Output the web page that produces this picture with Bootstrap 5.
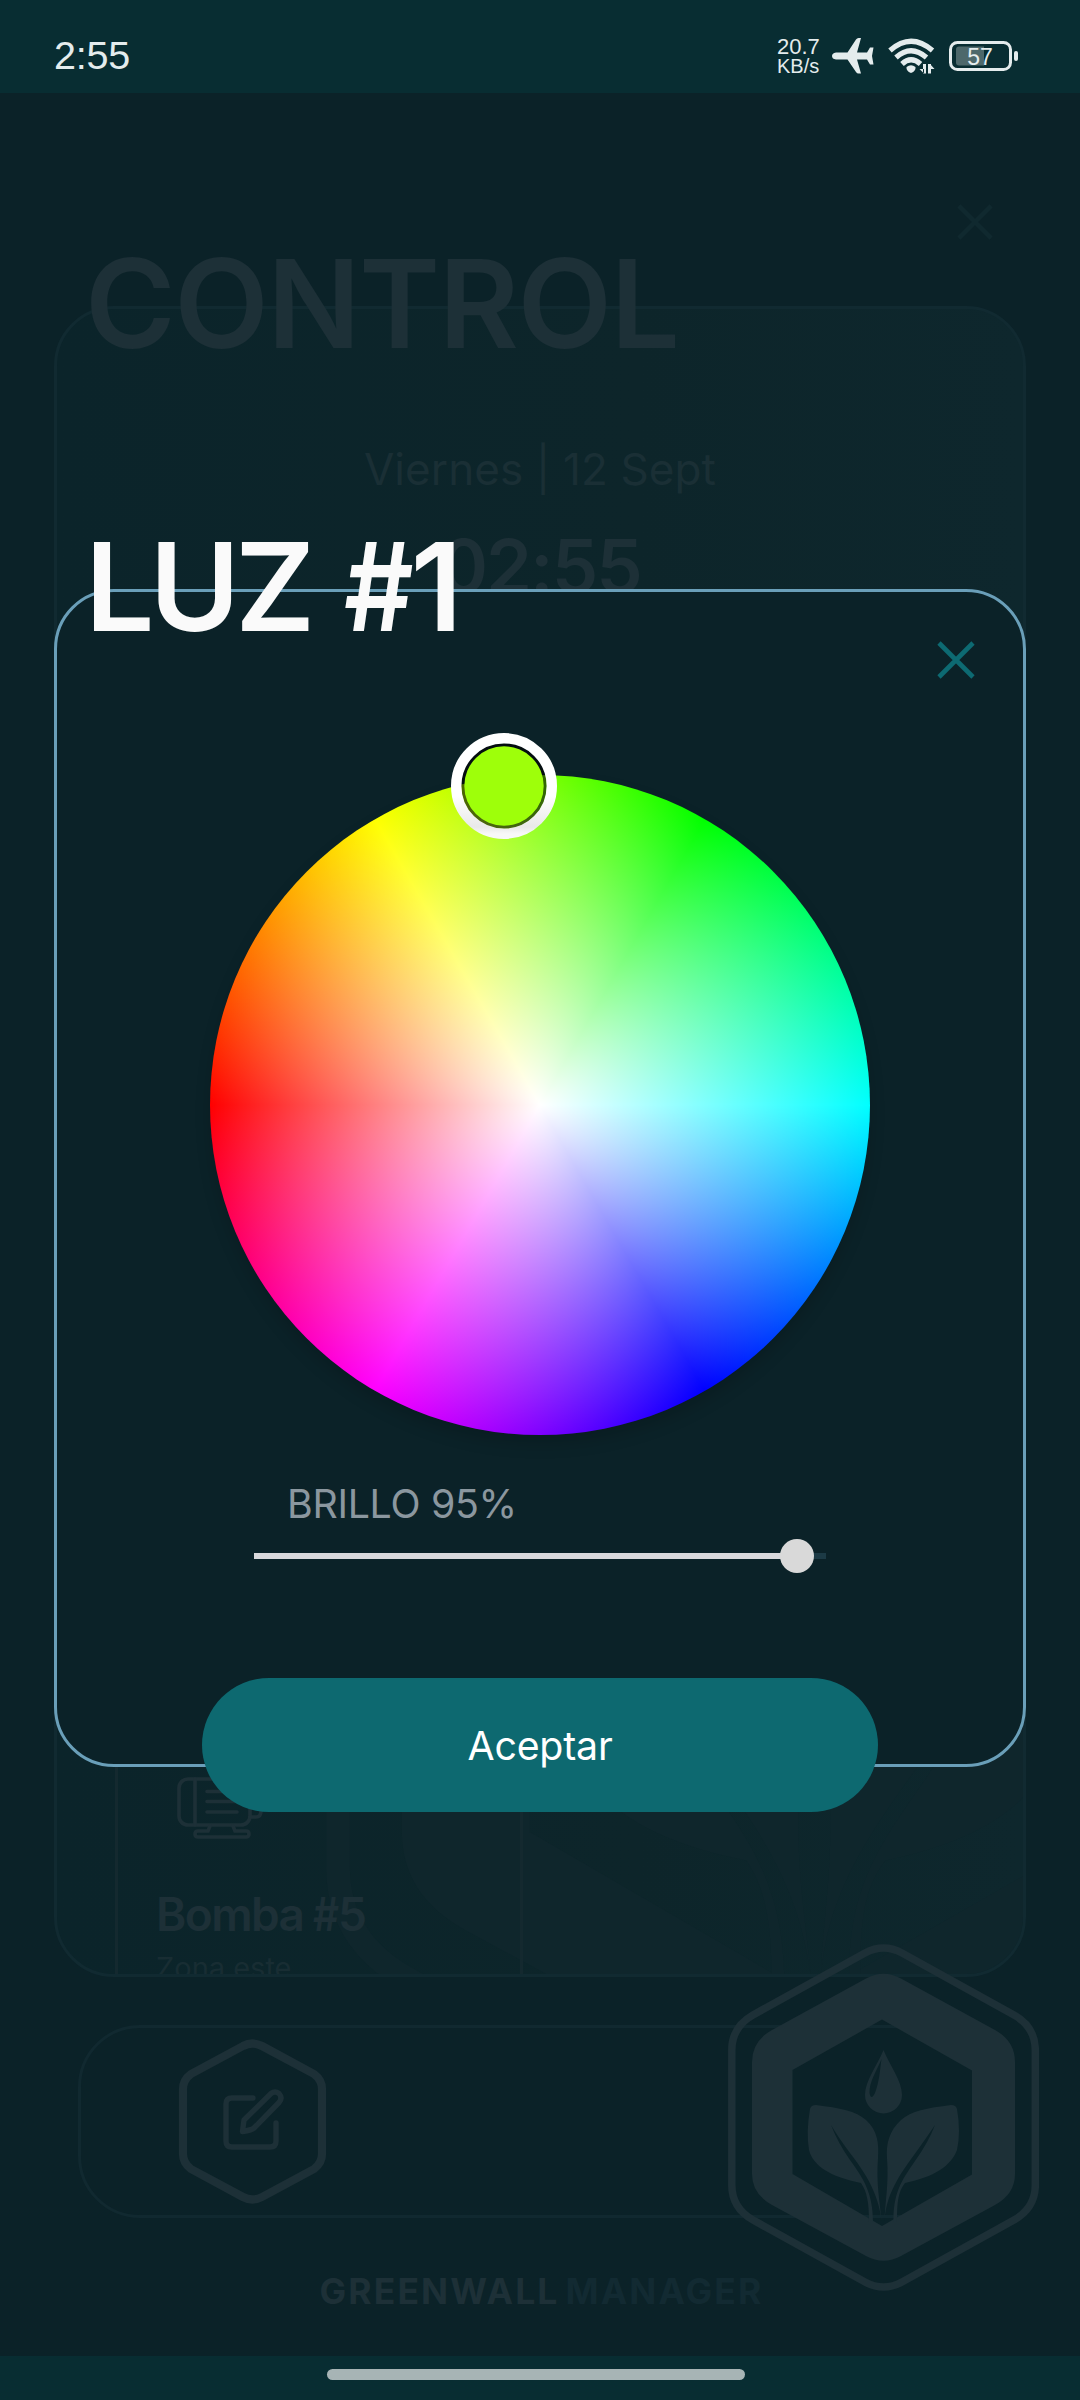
<!DOCTYPE html>
<html lang="es">
<head>
<meta charset="utf-8">
<meta name="viewport" content="width=device-width, initial-scale=1">
<title>Greenwall Manager</title>
<link href="https://cdn.jsdelivr.net/npm/bootstrap@5.3.0/dist/css/bootstrap.min.css" rel="stylesheet">
<style>
  body { background: #0b2228; font-family: Inter, sans-serif; }
  .phone { width: 1080px; height: 2400px; background: #0b2228; color: #1d3037; }
  .statusbar { height: 93px; background: #082d32; color: #e4eced; font-family: "Liberation Sans", sans-serif; padding: 17px 61px 0 54px; }
  .status-icons { height: 78px; }
  .clock { font-size: 39.5px; line-height: 76px; letter-spacing: -.2px; }
  .speed { font-size: 22px; line-height: 19px; width: 46px; margin-right: 9px; }
  .speed small { font-size: 20px; }
  .closerow { height: 151px; padding: 0 87px 4px 0; color: #10292f; }
  .bigtitle { font-size: 123px; line-height: 120px; font-weight: 600; letter-spacing: -5px; z-index: 1; }
  .page-title { margin-left: 85px; letter-spacing: -1.5px; }
  .panel { margin: -58px 54px 0 54px; height: 1671px; border: 3px solid #112a31; border-radius: 60px; background: linear-gradient(90deg, #0b242a, #0d252a 60%, #0e272d); }
  .datetxt { font-size: 44px; line-height: 60px; margin-top: 130px; letter-spacing: .1px; color: #1a2f35; }
  .timetxt { font-size: 74px; line-height: 80px; margin-top: 27px; font-weight: 600; letter-spacing: -2px; }
  .tile { margin: 1044px 0 0 58px; width: 408px; height: 400px; border: solid #14292f; border-width: 3px; padding: 124px 0 0 38px; }
  .tile-name { font-size: 46px; line-height: 60px; font-weight: 600; letter-spacing: -1.6px; margin-top: 45px; }
  .tile-zone { font-size: 29px; line-height: 40px; margin-top: 4px; letter-spacing: 0; color: #182d33; }
  .watermark { left: 269px; top: 796px; width: 983px; height: 1097px; color: #0f262c; }
  .toolbar { margin: 48px 78px 0; height: 193px; border: 3px solid #112930; border-radius: 62px; padding-left: 97px; }
  .brandline { font-size: 35.5px; line-height: 40px; font-weight: 650; margin-top: 54px; padding-left: 3px; gap: 6px; letter-spacing: 2.1px; }
  .brandline .second { color: #122a32; }
  .badge-logo { left: 728px; top: 1944px; width: 311px; height: 347px; color: #1d3037; }
  .navstrip { height: 44px; background: #082d32; padding: 13px 8px 0 0; }
  .navpill { width: 418px; height: 11px; background: #a7b4b5; border-radius: 6px; }

  .dialog { left: 54px; top: 589px; width: 972px; height: 1178px; border: 3px solid #6a9fb9; border-radius: 60px; background: #0b2228; }
  .dialog .bigtitle { color: #fafafa; margin: -65px 0 0 28px; word-spacing: 8px; }
  .hash { display: inline-block; letter-spacing: 0; transform: scaleX(.88); transform-origin: left; margin-right: -.105em; }
  .dialog-close { color: #0d6a72; margin-top: -6px; height: 38px; }
  .wheel { width: 660px; height: 660px; margin-top: 96px; background: radial-gradient(closest-side, #fff, rgba(255,255,255,0)), conic-gradient(from 270deg, #f00, #ff0, #0f0, #0ff, #00f, #f0f, #f00); box-shadow: 0 9px 16px rgba(0,0,0,.16); }
  .handle { left: 241px; top: -42px; width: 106px; height: 106px; }
  .bright { width: 572px; margin-top: 39px; }
  .bright-label { font-size: 39.3px; line-height: 60px; color: #8b979f; padding-left: 33px; letter-spacing: -.3px; }
  .track { height: 6px; margin-top: 19px; background: #1c3a45; }
  .track-fill { height: 6px; background: #d9d9dc; }
  .thumb { width: 34px; height: 34px; right: -17px; top: -14px; background: #d9d9d9; }
  .accept { width: 676px; height: 134px; margin-bottom: -48px; padding: 8px 0 6px; border-radius: 67px; background: #0d6970; color: #fff; font-size: 39.3px; letter-spacing: -.2px; }
  .accept:hover { background: #0d6970; color: #fff; }
</style>
</head>
<body>
<svg class="d-none">
  <symbol id="logo" viewBox="0 0 311 347">
    <path fill="none" stroke="currentColor" stroke-width="7.5" d="M137 9 Q155.5 -1 174 9 L286 71 Q307.3 83 307.3 106 V241 Q307.3 264 286 276 L174 338 Q155.5 348 137 338 L25 276 Q3.8 264 3.8 241 V106 Q3.8 83 25 71 Z"/>
    <path fill="currentColor" fill-rule="evenodd" d="M138 34.5 Q155.5 25 173 34.5 L267 86 Q287 97 287 118 V230 Q287 250 267 261 L173 312 Q155.5 321.5 138 312 L44 261 Q24 250 24 230 V118 Q24 97 44 86 Z M154 75.6 L64.5 126 V230 L154 282 L244 230.5 V126.5 Z"/>
    <path fill="currentColor" fill-rule="evenodd" d="M155.5 106 C162 122 174 137 174 151 A18.5 18.5 0 0 1 137 151 C137 137 149 122 155.5 106 Z M153.5 115 C149 126 141 138 141.5 149 Q143 157 147 149 C151 139 152 126 153.5 115 Z"/>
    <path fill="currentColor" d="M82 165 Q83 161 88 161 C112 164 128 167 138 176 C150 187 151 200 150 214 C148 240 152 258 153.5 277 C151 255 143 236 122 209 Q110 193 103 181 Q110 199 122 216 C136 235 145 250 145 278 H141 C141 258 139 248 133 239 C103 233 85 222 81 206 Q78 188 82 165 Z"/>
    <path fill="currentColor" d="M229 165 Q228 161 223 161 C199 164 183 167 173 176 C161 187 158 200 159 214 C161 240 157 258 156.5 277 C158 255 166 238 186 211 Q199 193 207 181 Q200 199 187 217 C173 237 165 250 165.5 278 H169 C169 258 170 248 177 239 C206 233 223 222 229 206 Q233 188 229 165 Z"/>
  </symbol>
  <symbol id="cross" viewBox="0 0 38 38">
    <path d="M2 2 L36 36 M36 2 L2 36" fill="none" stroke="currentColor" stroke-width="4.6"/>
  </symbol>
</svg>

<div class="phone position-relative overflow-hidden d-flex flex-column">
  <header class="statusbar d-flex justify-content-between align-items-start">
    <div class="clock">2:55</div>
    <div class="status-icons d-flex align-items-center">
      <div class="speed">20.7<br><small>KB/s</small></div>
      <svg width="42" height="36" viewBox="0 0 42 36"><path fill="currentColor" d="M4 14.5 H15.5 L24 1.5 Q25 0 26.5 0 H29 L25 14.5 H35 L38 9.5 H41.5 L40 18 L41.5 26.5 H38 L35 21.5 H25 L29 35.5 H26.5 Q25 35.5 24 34 L15.5 21.5 H4 Q0 21 0 18 Q0 15 4 14.5 Z"/></svg>
      <svg style="margin-left:14px" width="47" height="36" viewBox="0 0 47 36"><g fill="none" stroke="currentColor" stroke-width="5.2"><path d="M2 12.5 Q23 -6 44.5 12.5"/><path d="M8 19.5 Q23 6 38.5 19.5"/><path d="M14 26 Q23 17.5 32.5 26"/></g><path fill="currentColor" d="M18.5 29 Q23 25.5 27.5 29 Q28 33 23 35 Q18 33 18.5 29 Z M35 26 V35.5 H38 V26 Z M31.5 31 H36 V35.5 Z M40 26 V35.5 H43 V26 Z M42 31 H46.5 L42 26 Z"/></svg>
      <svg style="margin-left:14px" width="70" height="32" viewBox="0 0 70 32"><rect x="1.5" y="2.5" width="60" height="27" rx="7" fill="none" stroke="currentColor" stroke-width="3"/><path d="M10 6.5 H35 V25.5 H10 Q7 25.5 7 22.5 V9.5 Q7 6.5 10 6.5 Z" fill="#4d686b"/><rect x="65" y="11" width="4" height="10" rx="2" fill="currentColor"/><text x="31" y="24.5" text-anchor="middle" font-size="23" fill="currentColor">57</text></svg>
    </div>
  </header>

  <div class="closerow d-flex justify-content-end align-items-end"><svg width="36" height="36"><use href="#cross"/></svg></div>
  <div class="bigtitle page-title position-relative">CONTROL</div>
  <main class="panel position-relative overflow-hidden flex-shrink-0">
    <svg class="watermark position-absolute"><use href="#logo"/></svg>
    <div class="datetxt text-center position-relative">Viernes | 12 Sept</div>
    <div class="timetxt text-center position-relative">02:55</div>
    <section class="tile position-relative">
      <svg class="d-block" style="margin-left:21px" width="86" height="62" viewBox="0 0 86 62" fill="none" stroke="currentColor" stroke-width="3.6" stroke-linecap="round"><rect x="2" y="2" width="71" height="46" rx="9"/><path d="M18 2 V48 M30 14.5 H60 M30 24.5 H60 M30 35 H60 M73 11 H79 Q84 11 84 16 V34 Q84 40 79 40 H73 M33 49 L31 54 H21 Q18 54 18 57 Q18 60 21 60 H69 Q72 60 72 57 Q72 54 69 54 H58 L56 49"/></svg>
      <div class="tile-name">Bomba <span class="hash">#</span>5</div>
      <div class="tile-zone">Zona este</div>
    </section>
  </main>
  <div class="toolbar d-flex align-items-center flex-shrink-0">
    <svg width="149" height="165" viewBox="0 0 149 165" fill="none" stroke="currentColor" stroke-linecap="round" stroke-linejoin="round">
      <path stroke-width="8.2" d="M65 7 Q74.5 2 84 7 L136 35 Q144 41 144 50 V115 Q144 124 136 130 L84 158 Q74.5 163 65 158 L13 130 Q5 124 5 115 V50 Q5 41 13 35 Z"/>
      <path stroke-width="5.4" d="M75 59 H54 Q48 59 48 65 V102 Q48 108 54 108 H92 Q98 108 98 102 V84 M66 81 L93 54.5 Q97 51.5 101 54.5 Q105 59 101 63.5 L76 89 Q74 91 64.5 92.5 Z"/>
    </svg>
  </div>
  <footer class="brandline d-flex justify-content-center"><span>GREENWALL</span><span class="second">MANAGER</span></footer>
  <svg class="badge-logo position-absolute"><use href="#logo"/></svg>
  <div class="navstrip mt-auto d-flex justify-content-center"><div class="navpill"></div></div>

  <section class="dialog position-absolute d-flex flex-column align-items-center">
    <div class="bigtitle align-self-start">LUZ <span class="hash">#</span>1</div>
    <button class="dialog-close btn p-0 border-0 align-self-end me-5" aria-label="Cerrar"><svg class="d-block" width="38" height="38"><use href="#cross"/></svg></button>
    <div class="wheel rounded-circle position-relative flex-shrink-0">
      <svg class="handle position-absolute" viewBox="0 0 106 106">
        <defs><linearGradient id="ring" x2="0" y2="1"><stop offset=".6" stop-color="#fff"/><stop offset=".93" stop-color="#e9e9e9"/><stop offset="1" stop-color="#f8f8f8"/></linearGradient></defs>
        <circle cx="53" cy="53" r="41" fill="none" stroke="#000" stroke-opacity=".6" stroke-width="4"/>
        <circle cx="53" cy="53" r="47.8" fill="none" stroke="url(#ring)" stroke-width="10.4"/>
        <circle cx="53" cy="53" r="39.7" fill="#9eff0a"/>
      </svg>
    </div>
    <div class="bright">
      <div class="bright-label">BRILLO 95%</div>
      <div class="track"><div class="track-fill position-relative" style="width:95%"><span class="thumb rounded-circle position-absolute"></span></div></div>
    </div>
    <button class="accept btn border-0 mt-auto flex-shrink-0">Aceptar</button>
  </section>
</div>
<script src="https://cdn.jsdelivr.net/npm/bootstrap@5.3.0/dist/js/bootstrap.bundle.min.js"></script>
</body>
</html>
